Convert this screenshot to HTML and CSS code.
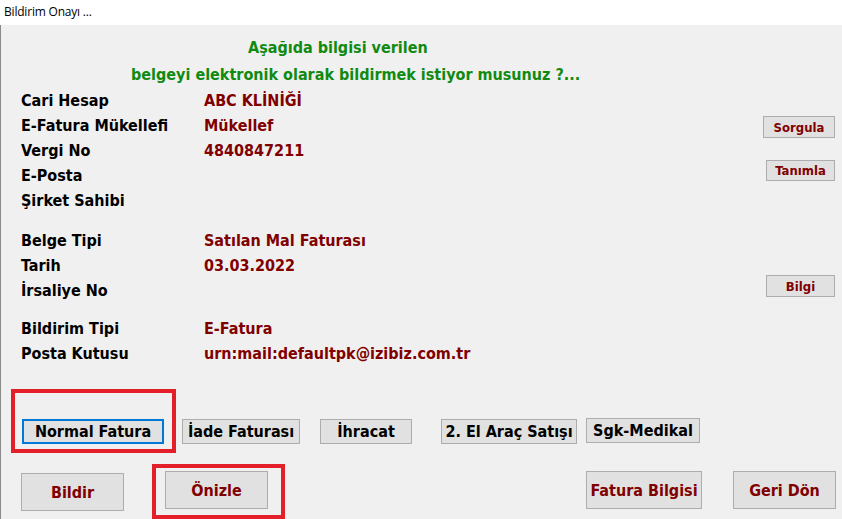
FILE: index.html
```html
<!DOCTYPE html>
<html lang="tr">
<head>
    <meta charset="UTF-8">
    <meta name="viewport" content="width=device-width, initial-scale=1.0">
    <title>Bildirim Onayı</title>
    <link rel="stylesheet" href="styles.css">
</head>
<body>
    <div class="titlebar">Bildirim Onayı ...</div>
    <div class="dialog">
        <div class="heading">
            <div class="heading-line first">Aşağıda bilgisi verilen</div>
            <div class="heading-line second">belgeyi elektronik olarak bildirmek istiyor musunuz ?...</div>
        </div>

        <div class="info">
            <div class="label">Cari Hesap</div>
            <div class="value">ABC KLİNİĞİ</div>
            <div></div>
            <div class="label">E-Fatura Mükellefi</div>
            <div class="value">Mükellef</div>
            <button class="small-btn btn-sorgula">Sorgula</button>
            <div class="label">Vergi No</div>
            <div class="value">4840847211</div>
            <div></div>
            <div class="label">E-Posta</div>
            <div class="value"></div>
            <button class="small-btn btn-tanimla">Tanımla</button>
            <div class="label">Şirket Sahibi</div>
            <div class="value"></div>
            <div></div>
        </div>

        <div class="info group-2">
            <div class="label">Belge Tipi</div>
            <div class="value">Satılan Mal Faturası</div>
            <div></div>
            <div class="label">Tarih</div>
            <div class="value">03.03.2022</div>
            <div></div>
            <div class="label">İrsaliye No</div>
            <div class="value"></div>
            <button class="small-btn btn-bilgi">Bilgi</button>
        </div>

        <div class="info group-3">
            <div class="label">Bildirim Tipi</div>
            <div class="value">E-Fatura</div>
            <div></div>
            <div class="label">Posta Kutusu</div>
            <div class="value">urn:mail:defaultpk@izibiz.com.tr</div>
            <div></div>
        </div>

        <div class="types">
            <button class="btn type-btn focused t-normal">Normal Fatura</button>
            <button class="btn type-btn t-iade">İade Faturası</button>
            <button class="btn type-btn t-ihracat">İhracat</button>
            <button class="btn type-btn t-arac">2. El Araç Satışı</button>
            <button class="btn type-btn t-sgk">Sgk-Medikal</button>
        </div>

        <div class="actions">
            <button class="btn action-btn a-bildir">Bildir</button>
            <button class="btn action-btn a-onizle">Önizle</button>
            <div class="spacer"></div>
            <button class="btn action-btn a-fatura">Fatura Bilgisi</button>
            <button class="btn action-btn a-geri">Geri Dön</button>
        </div>

        <div class="mark mark-normal"></div>
        <div class="mark mark-onizle"></div>
    </div>
</body>
</html>
```

FILE: styles.css
```css
* {
    padding: 0;
    margin: 0;
    box-sizing: border-box;
}

body {
    width: 842px;
    height: 519px;
    overflow: hidden;
    background-color: #ffffff;
    font-family: "DejaVu Sans Condensed", "DejaVu Sans", sans-serif;
    font-weight: bold;
}

.titlebar {
    height: 25px;
    line-height: 24px;
    padding-left: 4px;
    font-family: "Open Sans", "Noto Sans", sans-serif;
    font-weight: normal;
    font-size: 12px;
    letter-spacing: -0.2px;
    color: #000000;
    background-color: #ffffff;
}

.dialog {
    position: relative;
    height: 494px;
    background-color: #f0f0f0;
    border-left: 1px solid #8a8a8a;
}

.heading {
    padding-top: 9px;
    color: #118a11;
    font-size: 16px;
    line-height: 27px;
}

.heading-line.first {
    padding-left: 247px;
}

.heading-line.second {
    padding-left: 130px;
}

.info {
    display: grid;
    grid-template-columns: 183px 1fr 90px;
    grid-auto-rows: 25px;
    padding-left: 20px;
    font-size: 16px;
    line-height: 25px;
}

.info.group-2 {
    margin-top: 15px;
}

.info.group-3 {
    margin-top: 13px;
}

.label {
    color: #000000;
}

.value {
    color: #800000;
}

button {
    font-family: inherit;
    font-weight: bold;
    cursor: default;
}

.small-btn {
    justify-self: end;
    align-self: start;
    margin-right: 7px;
    height: 22px;
    font-size: 13px;
    color: #800000;
    background-color: #e1e1e1;
    border: 1px solid #adadad;
}

.btn-sorgula {
    width: 72px;
    margin-top: 3px;
}

.btn-tanimla {
    width: 69px;
    height: 21px;
    margin-top: -3px;
}

.btn-bilgi {
    width: 69px;
    margin-top: -3px;
}

.btn {
    background-color: #e1e1e1;
    border: 1px solid #adadad;
    font-size: 16px;
}

.types {
    display: flex;
    align-items: flex-start;
    margin-top: 53px;
    padding-left: 21px;
}

.type-btn {
    height: 25px;
    color: #000000;
}

.type-btn.focused {
    border: 2px solid #0078d7;
}

.t-normal {
    width: 142px;
}

.t-iade {
    width: 118px;
    margin-left: 18px;
}

.t-ihracat {
    width: 92px;
    margin-left: 20px;
}

.t-arac {
    width: 136px;
    margin-left: 29px;
}

.t-sgk {
    width: 114px;
    margin-left: 9px;
    margin-top: -1px;
}

.actions {
    display: flex;
    align-items: flex-start;
    margin-top: 27px;
    padding-left: 20px;
    padding-right: 6px;
}

.action-btn {
    height: 38px;
    color: #800000;
}

.a-bildir {
    width: 103px;
    margin-top: 2px;
}

.a-onizle {
    width: 103px;
    margin-left: 41px;
}

.spacer {
    flex: 1;
}

.a-fatura {
    width: 116px;
}

.a-geri {
    width: 103px;
    margin-left: 31px;
}

/* red highlight frames drawn over the form */
.mark {
    position: absolute;
    border: 4px solid #e3202a;
}

.mark-normal {
    left: 10px;
    top: 364px;
    width: 165px;
    height: 64px;
}

.mark-onizle {
    left: 151px;
    top: 439px;
    width: 133px;
    height: 55px;
}
```
